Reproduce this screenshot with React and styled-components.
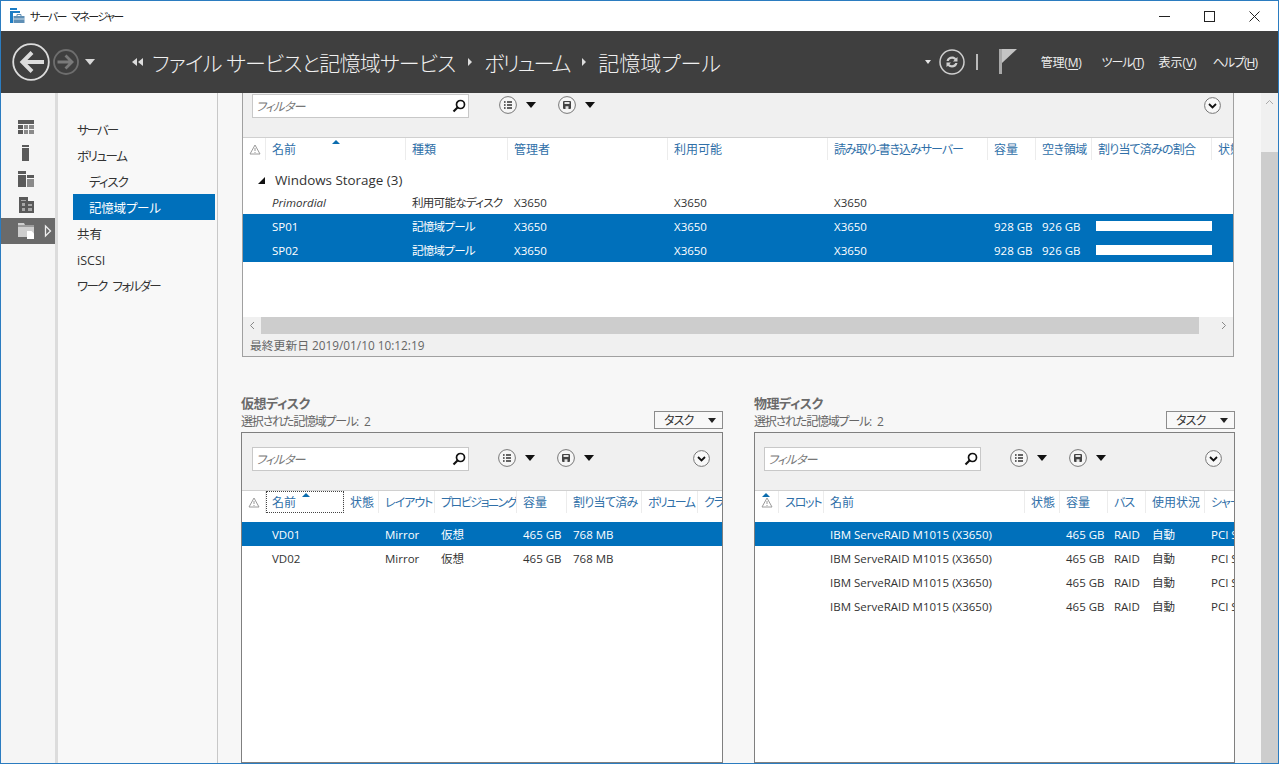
import React from 'react';
import styled, { createGlobalStyle } from 'styled-components';

const selectedBlue = '#0070bb';
const headerDark = '#3f3f3f';
const toolbarGray = '#f0f0f0';
const headerBlue = '#2f6fa8';

const GlobalStyle = createGlobalStyle`
    html, body {
        margin: 0;
        padding: 0;
        height: 100%;
        overflow: hidden;
    }
    body {
        font-family: "Open Sans", "Noto Sans CJK JP", sans-serif;
        font-size: 12px;
        color: #333;
        font-feature-settings: "palt";
    }
`;

const Window = styled.div`
    width: 1279px;
    height: 764px;
    box-sizing: border-box;
    border: 1px solid #2b7cc0;
    display: flex;
    flex-direction: column;
    overflow: hidden;
    background: #f7f7f7;
`;

const TitleBar = styled.div`
    height: 30px;
    flex: none;
    background: #fff;
    display: flex;
    align-items: center;
    padding-left: 8px;
    gap: 5px;
    font-size: 11px;
    color: #222;
`;

const TitleText = styled.span`
    letter-spacing: -1.6px;
    word-spacing: 4px;
`;

const WindowButtons = styled.div`
    margin-left: auto;
    display: flex;
    height: 100%;
    margin-right: 1px;
`;

const WindowButton = styled.div`
    width: 45px;
    display: flex;
    align-items: center;
    justify-content: center;
`;

const Header = styled.div`
    height: 62px;
    flex: none;
    background: ${headerDark};
    display: flex;
    align-items: center;
    padding-left: 11px;
    color: #eee;
`;

const NavArrows = styled.div`
    display: flex;
    align-items: center;
    gap: 3px;
    width: 120px;
`;

const Crumbs = styled.div`
    display: flex;
    align-items: center;
    font-size: 21px;
    font-weight: 300;
    color: #f0f0f0;
    white-space: nowrap;
`;

const Crumb = styled.span`
    letter-spacing: ${(p) => p.$tight || 0}px;
`;

const CrumbArrow = styled.span`
    width: 0;
    height: 0;
    border-left: 4px solid #ddd;
    border-top: 4px solid transparent;
    border-bottom: 4px solid transparent;
    margin: 0 12px 0 13px;
`;

const BackArrows = styled.span`
    display: flex;
    gap: 1px;
    margin-right: 9px;
`;

const SmallLeft = styled.span`
    width: 0;
    height: 0;
    border-right: 5px solid #ddd;
    border-top: 4px solid transparent;
    border-bottom: 4px solid transparent;
`;

const HeaderRight = styled.div`
    margin-left: auto;
    display: flex;
    align-items: center;
    height: 100%;
    padding-right: 21px;
`;

const HistoryCaret = styled.span`
    width: 0;
    height: 0;
    border-top: 6px solid #d8d8d8;
    border-left: 5px solid transparent;
    border-right: 5px solid transparent;
    margin-left: 3px;
`;

const NotifyCaret = styled.span`
    width: 0;
    height: 0;
    border-top: 4px solid #e6e6e6;
    border-left: 3.5px solid transparent;
    border-right: 3.5px solid transparent;
    margin-right: 8px;
`;

const HeaderDivider = styled.span`
    width: 2px;
    height: 16px;
    background: #bbb;
    margin: 0 21px 0 11px;
`;

const MenuList = styled.div`
    display: flex;
    margin-left: 24px;
    font-size: 12px;
    color: #eee;
`;

const MenuItem = styled.span`
    white-space: nowrap;
    margin-left: ${(p) => p.$gap || 0}px;
    letter-spacing: ${(p) => p.$tight || 0}px;
    u { text-underline-offset: 2px; }
`;

const Body = styled.div`
    flex: 1;
    display: flex;
    min-height: 0;
`;

const Rail = styled.div`
    width: 54px;
    flex: none;
    background: #f5f5f5;
    padding-top: 21px;
    box-sizing: border-box;
`;

const RailItem = styled.div`
    height: 26px;
    display: flex;
    align-items: center;
    padding-left: 16px;
    gap: 9px;
    background: ${(p) => (p.$active ? '#6a6a6a' : 'transparent')};
`;

const Nav = styled.div`
    width: 163px;
    flex: none;
    box-sizing: border-box;
    border-left: 3px solid #dcdcdc;
    border-right: 1px solid #c8c8c8;
    background: #f8f8f8;
    padding: 23px 2px 0 15px;
    font-size: 12.5px;
`;

const NavItem = styled.div`
    height: 26px;
    line-height: 29px;
    padding-left: ${(p) => (p.$sub ? '16px' : '4px')};
    letter-spacing: ${(p) => p.$tight || 0}px;
    word-spacing: 4px;
    color: ${(p) => (p.$selected ? '#fff' : '#333')};
    background: ${(p) => (p.$selected ? selectedBlue : 'transparent')};
    white-space: nowrap;
`;

const Main = styled.div`
    flex: 1;
    min-width: 0;
    padding: 0 27px 0 24px;
    display: flex;
    flex-direction: column;
    overflow: hidden;
`;

const PageScroll = styled.div`
    width: 17px;
    flex: none;
    background: ${toolbarGray};
    display: flex;
    flex-direction: column;
`;

const ScrollUp = styled.div`
    height: 59px;
    display: flex;
    justify-content: center;
    padding-top: 6px;
    box-sizing: border-box;
`;

const ScrollThumb = styled.div`
    flex: 1;
    background: #cdcdcd;
`;

const Panel = styled.div`
    border: 1px solid ${(p) => (p.$dark ? '#7f7f7f' : '#a0a0a0')};
    border-top: ${(p) => (p.$open ? 'none' : '')};
    background: #fff;
    display: flex;
    flex-direction: column;
    overflow: hidden;
    box-sizing: border-box;
    height: ${(p) => p.$height}px;
    flex: ${(p) => (p.$grow ? 1 : 'none')};
`;

const Toolbar = styled.div`
    height: ${(p) => p.$height}px;
    flex: none;
    box-sizing: border-box;
    background: ${toolbarGray};
    border-bottom: 1px solid #d0d0d0;
    display: flex;
    align-items: flex-start;
    padding: ${(p) => p.$top}px 12px 0 ${(p) => p.$left}px;
`;

const Filter = styled.div`
    width: 217px;
    height: 24px;
    flex: none;
    box-sizing: border-box;
    background: #fff;
    border: 1px solid #c8c8c8;
    display: flex;
    align-items: center;
    justify-content: space-between;
    padding: 0 1px 0 3px;
    font-style: italic;
    font-size: 12px;
    letter-spacing: -0.8px;
    color: #777;
`;

const ToolButton = styled.div`
    display: flex;
    align-items: center;
    gap: 9px;
    margin-left: ${(p) => p.$gap}px;
    height: 22px;
`;

const Caret = styled.span`
    width: 0;
    height: 0;
    border-top: 6px solid #111;
    border-left: 5.5px solid transparent;
    border-right: 5.5px solid transparent;
`;

const ExpandButton = styled.div`
    margin-left: auto;
    height: 22px;
    display: flex;
    align-items: center;
`;

const GridRow = styled.div`
    display: grid;
    grid-template-columns: ${(p) => p.$cols};
    flex: none;
    white-space: nowrap;
`;

const HeadRow = styled(GridRow)`
    height: ${(p) => p.$height}px;
    background: #fff;
    color: ${headerBlue};
    font-size: 12px;
`;

const HeadCell = styled.div`
    position: relative;
    height: 22px;
    line-height: 24px;
    padding-left: 6px;
    box-sizing: border-box;
    overflow: hidden;
    letter-spacing: ${(p) => p.$tight || 0}px;
    border-right: 1px solid #ececec;
    outline: ${(p) => (p.$focus ? '1px dotted #444' : 'none')};
    outline-offset: -1px;
`;

const SortMark = styled.span`
    position: absolute;
    top: 2px;
    left: ${(p) => p.$left}px;
    width: 0;
    height: 0;
    border-bottom: 4px solid #0a6cae;
    border-left: 4px solid transparent;
    border-right: 4px solid transparent;
`;

const WarnCell = styled(HeadCell)`
    padding: 6px 0 0 6px;
    line-height: 0;
`;

const GroupRow = styled.div`
    height: 22px;
    flex: none;
    box-sizing: border-box;
    padding: 2px 0 0 15px;
    display: flex;
    align-items: center;
    gap: 10px;
    font-size: 13.4px;
    color: #333;
`;

const GroupMark = styled.span`
    width: 0;
    height: 0;
    border-bottom: 7px solid #111;
    border-left: 7px solid transparent;
`;

const TableRow = styled(GridRow)`
    height: 24px;
    line-height: 25px;
    font-size: 11.5px;
    background: ${(p) => (p.$selected ? selectedBlue : '#fff')};
    color: ${(p) => (p.$selected ? '#fff' : '#333')};
`;

const Cell = styled.div`
    padding-left: 6px;
    overflow: hidden;
    font-style: ${(p) => (p.$italic ? 'italic' : 'normal')};
`;

const Tight = styled.span`
    letter-spacing: -0.7px;
`;

const BarCell = styled.div`
    display: flex;
    align-items: center;
    padding-left: 4px;
`;

const Bar = styled.div`
    width: 100%;
    height: 10px;
    background: #fff;
`;

const RowsArea = styled.div`
    flex: 1;
    min-height: 0;
    display: flex;
    flex-direction: column;
    background: #fff;
`;

const HScroll = styled.div`
    height: 17px;
    flex: none;
    background: ${toolbarGray};
    display: flex;
    align-items: center;
    justify-content: space-between;
`;

const HScrollArrow = styled.div`
    width: 18px;
    flex: none;
    display: flex;
    justify-content: center;
`;

const HScrollTrack = styled.div`
    flex: 1;
    height: 100%;
`;

const HScrollThumb = styled.div`
    width: ${(p) => p.$width}px;
    height: 100%;
    background: #cdcdcd;
`;

const Footer = styled.div`
    height: 22px;
    flex: none;
    background: ${toolbarGray};
    padding-left: 7px;
    line-height: 23px;
    font-size: 11.8px;
    color: #666;
`;

const LowerGrid = styled.div`
    display: grid;
    grid-template-columns: 482px 481px;
    column-gap: 31px;
    margin: 37px -2px 0 -1px;
    flex: 1;
    min-height: 0;
`;

const Section = styled.div`
    display: flex;
    flex-direction: column;
    min-width: 0;
    min-height: 0;
`;

const SectionHead = styled.div`
    height: 38px;
    flex: none;
    display: flex;
    align-items: flex-end;
    justify-content: space-between;
    padding-bottom: 2px;
    box-sizing: border-box;
`;

const SectionTitle = styled.div`
    font-size: 13px;
    font-weight: 700;
    letter-spacing: -0.5px;
    color: #6a6a6a;
    line-height: 20px;
`;

const SectionSub = styled.div`
    font-size: 12px;
    letter-spacing: -1.2px;
    word-spacing: 4px;
    color: #666;
    line-height: 17px;
`;

const TaskButton = styled.div`
    width: 69px;
    height: 18px;
    margin-bottom: 1px;
    box-sizing: border-box;
    border: 1px solid #8c8c8c;
    background: #f8f8f8;
    display: flex;
    align-items: center;
    justify-content: space-between;
    padding: 0 6px 0 9px;
    font-size: 12px;
    letter-spacing: -0.8px;
    color: #333;
`;

const TaskCaret = styled.span`
    width: 0;
    height: 0;
    border-top: 5px solid #222;
    border-left: 4.5px solid transparent;
    border-right: 4.5px solid transparent;
`;

const AppIcon = () => (
    <svg width="16" height="16" viewBox="0 0 16 16">
        <rect x="1" y="0" width="7" height="2" fill="#1c7cc4" />
        <rect x="1" y="3" width="10" height="2" fill="#1c7cc4" />
        <rect x="1" y="5" width="3" height="10" fill="#1c7cc4" />
        <path d="M8 8V6.500h4V8" fill="none" stroke="#5f8fb5" />
        <rect x="4.500" y="8" width="11" height="7" fill="#5f8fb5" />
        <path d="M4.500 11h11" stroke="#fff" strokeWidth=".7" />
    </svg>
);

const SearchIcon = () => (
    <svg width="16" height="16" viewBox="0 0 16 16">
        <circle cx="9.5" cy="6.5" r="4" fill="none" stroke="#111" strokeWidth="1.7" />
        <path d="M6.5 9.5 2.5 13.5" stroke="#111" strokeWidth="2.2" />
    </svg>
);

const ListIcon = () => (
    <svg width="18" height="18" viewBox="0 0 18 18">
        <circle cx="9" cy="9" r="8.4" fill="#f6f6f6" stroke="#777" />
        <path d="M5 6h1.600M8 6h5M5 9h1.600M8 9h5M5 12h1.600M8 12h5" stroke="#333" strokeWidth="1.7" />
    </svg>
);

const SaveIcon = () => (
    <svg width="18" height="18" viewBox="0 0 18 18">
        <circle cx="9" cy="9" r="8.4" fill="#f6f6f6" stroke="#777" />
        <rect x="5" y="5" width="8" height="8" rx="1" fill="#444" />
        <path d="M6.500 6h5v2h-5zM7.500 10.200h3V13h-3z" fill="#e4e4e4" />
    </svg>
);

const ExpandIcon = () => (
    <svg width="17" height="17" viewBox="0 0 17 17">
        <circle cx="8.5" cy="8.5" r="7.9" fill="#f8f8f8" stroke="#777" />
        <path d="M5 7l3.5 3.5L12 7" fill="none" stroke="#111" strokeWidth="1.8" />
    </svg>
);

const WarnIcon = () => (
    <svg width="12" height="11" viewBox="0 0 12 11">
        <path d="M6 1 11 10H1z" fill="none" stroke="#9a9a9a" />
        <path d="M6 4v3M6 8v1" stroke="#9a9a9a" />
    </svg>
);

const BackIcon = () => (
    <svg width="38" height="38" viewBox="0 0 38 38">
        <circle cx="19" cy="19" r="17.8" fill="none" stroke="#dcdcdc" strokeWidth="1.800" />
        <path d="M32 19H10M20 9.500 10.500 19l9.500 9.500" fill="none" stroke="#dcdcdc" strokeWidth="4" />
    </svg>
);

const ForwardIcon = () => (
    <svg width="26" height="26" viewBox="0 0 26 26">
        <circle cx="13" cy="13" r="12" fill="none" stroke="#6e6e6e" strokeWidth="1.800" />
        <path d="M4.500 13H19M12.500 6.500 19 13l-6.500 6.500" fill="none" stroke="#7a7a7a" strokeWidth="2.800" />
    </svg>
);

const RefreshIcon = () => (
    <svg width="26" height="26" viewBox="0 0 26 26">
        <circle cx="13" cy="13" r="12" fill="none" stroke="#cfcfcf" strokeWidth="1.5" />
        <path d="M7.500 12c.5-3 3-4.500 5.500-4.500 1.800 0 3 .7 4 1.700L18.500 8v4.500H14l1.600-1.700c-.7-.7-1.600-1-2.600-1-1.500 0-2.700.8-3.200 2.200zM18.500 14c-.5 3-3 4.500-5.500 4.500-1.800 0-3-.7-4-1.700L7.500 18v-4.500H12l-1.600 1.700c.7.700 1.600 1 2.600 1 1.500 0 2.700-.8 3.200-2.200z" fill="#cfcfcf" />
    </svg>
);

const FlagIcon = () => (
    <svg width="18" height="26" viewBox="0 0 18 26">
        <rect x="0" y="0" width="3" height="25" fill="#a8a8a8" />
        <path d="M3 0h15L3 14z" fill="#c4c4c4" />
    </svg>
);

const railDark = '#5a5a5a';
const railMid = '#8a8a8a';

const DashboardIcon = () => (
    <svg width="18" height="16" viewBox="0 0 18 16">
        <rect x="1" y="1" width="16" height="4" fill={railDark} />
        <path d="M1 6h5v4H1zM1 11h5v4H1z" fill={railDark} />
        <path d="M7 6h4v4H7zM12 6h5v4h-5zM7 11h4v4H7zM12 11h5v4h-5z" fill={railMid} />
    </svg>
);

const LocalIcon = () => (
    <svg width="18" height="18" viewBox="0 0 18 18">
        <rect x="5" y="1" width="7" height="2" fill={railDark} />
        <rect x="5" y="4" width="7" height="13" fill={railDark} />
    </svg>
);

const AllServersIcon = () => (
    <svg width="18" height="18" viewBox="0 0 18 18">
        <rect x="1" y="1" width="8" height="3" fill={railDark} />
        <rect x="1" y="5" width="8" height="12" fill={railDark} />
        <rect x="10" y="5" width="7" height="3" fill={railDark} />
        <rect x="10" y="9" width="7" height="8" fill={railMid} />
    </svg>
);

const RolesIcon = () => (
    <svg width="18" height="16" viewBox="0 0 18 16">
        <path d="M2 0h9v4h6v12H2z" fill={railDark} />
        <path d="M4 3h5v1H4zM5 6h3v3H5zM5 11h3v3H5zM11 7h4v2h-4zM11 11h4v3h-4z" fill="#a8a8a8" />
    </svg>
);

const FilesIcon = () => (
    <svg width="18" height="18" viewBox="0 0 18 18">
        <path d="M1 1h6l1 2h9v12H1z" fill="#cfcfcf" />
        <path d="M1 4h16" stroke="#6a6a6a" />
        <path d="M10 9h4.500l2.500 2.500V17h-7z" fill="#fff" />
    </svg>
);

const RailExpand = () => (
    <svg width="8" height="14" viewBox="0 0 8 14">
        <path d="M1.500 2l5 5-5 5z" fill="none" stroke="#eee" strokeWidth="1.300" />
    </svg>
);

const TableToolbar = ({ height, top, left, listGap }) => (
    <Toolbar $height={height} $top={top} $left={left}>
        <Filter>
            フィルター
            <SearchIcon />
        </Filter>
        <ToolButton $gap={listGap}>
            <ListIcon />
            <Caret />
        </ToolButton>
        <ToolButton $gap={22}>
            <SaveIcon />
            <Caret />
        </ToolButton>
        <ExpandButton>
            <ExpandIcon />
        </ExpandButton>
    </Toolbar>
);

const poolCols = '23px 140px 102px 160px 160px 160px 48px 56px 120px 40px';
const virtualCols = '24px 78px 35px 56px 82px 50px 75px 56px 40px';
const physicalCols = '24px 45px 201px 35px 48px 38px 59px 60px';

const poolHeaders = [
    { text: '名前' },
    { text: '種類' },
    { text: '管理者' },
    { text: '利用可能' },
    { text: '読み取り-書き込みサーバー', tight: -1 },
    { text: '容量' },
    { text: '空き領域', tight: -0.4 },
    { text: '割り当て済みの割合', tight: -0.8 },
    { text: '状態' },
];
const virtualHeaders = [
    { text: '名前' },
    { text: '状態' },
    { text: 'レイアウト', tight: -1 },
    { text: 'プロビジョニング', tight: -1.5 },
    { text: '容量' },
    { text: '割り当て済み', tight: -0.7 },
    { text: 'ボリューム', tight: -1.6 },
    { text: 'クラスター', tight: -1 },
];
const physicalHeaders = [
    { text: 'スロット', tight: -1.2 },
    { text: '名前' },
    { text: '状態' },
    { text: '容量' },
    { text: 'バス', tight: -1 },
    { text: '使用状況' },
    { text: 'シャーシ', tight: -1 },
];

const TableHead = ({ cols, labels, height, focusName, sortLeft, warnSort }) => (
    <HeadRow $cols={cols} $height={height}>
        <WarnCell>
            {warnSort && <SortMark $left={7} />}
            <WarnIcon />
        </WarnCell>
        {labels.map((label, i) => (
            <HeadCell key={label.text} $tight={label.tight} $focus={focusName && i === 0}>
                {i === 0 && sortLeft && <SortMark $left={sortLeft} />}
                {label.text}
            </HeadCell>
        ))}
    </HeadRow>
);

const DataRow = ({ cols, cells, selected, italic, bar }) => (
    <TableRow $cols={cols} $selected={selected}>
        <Cell />
        {cells.map((text, i) => (
            <Cell key={i} $italic={italic && i === 0}>{text}</Cell>
        ))}
        {bar && (
            <BarCell>
                <Bar />
            </BarCell>
        )}
    </TableRow>
);

const App = () => (
    <>
        <GlobalStyle />
        <Window>
            <TitleBar>
                <AppIcon />
                <TitleText>サーバー マネージャー</TitleText>
                <WindowButtons>
                    <WindowButton>
                        <svg width="11" height="11" viewBox="0 0 11 11"><path d="M0 5.500h11" stroke="#222" /></svg>
                    </WindowButton>
                    <WindowButton>
                        <svg width="11" height="11" viewBox="0 0 11 11"><rect x=".5" y=".5" width="10" height="10" fill="none" stroke="#222" /></svg>
                    </WindowButton>
                    <WindowButton>
                        <svg width="11" height="11" viewBox="0 0 11 11"><path d="M.5.5l10 10M10.500.5l-10 10" stroke="#222" /></svg>
                    </WindowButton>
                </WindowButtons>
            </TitleBar>
            <Header>
                <NavArrows>
                    <BackIcon />
                    <ForwardIcon />
                    <HistoryCaret />
                </NavArrows>
                <Crumbs>
                    <BackArrows>
                        <SmallLeft />
                        <SmallLeft />
                    </BackArrows>
                    <Crumb $tight={-0.8}>ファイル サービスと記憶域サービス</Crumb>
                    <CrumbArrow />
                    <Crumb $tight={-2}>ボリューム</Crumb>
                    <CrumbArrow />
                    <Crumb>記憶域プール</Crumb>
                </Crumbs>
                <HeaderRight>
                    <NotifyCaret />
                    <RefreshIcon />
                    <HeaderDivider />
                    <FlagIcon />
                    <MenuList>
                        <MenuItem $tight={-0.2}>管理(<u>M</u>)</MenuItem>
                        <MenuItem $gap={20} $tight={-1}>ツール(<u>T</u>)</MenuItem>
                        <MenuItem $gap={15}>表示(<u>V</u>)</MenuItem>
                        <MenuItem $gap={16} $tight={-1}>ヘルプ(<u>H</u>)</MenuItem>
                    </MenuList>
                </HeaderRight>
            </Header>
            <Body>
                <Rail>
                    <RailItem><DashboardIcon /></RailItem>
                    <RailItem><LocalIcon /></RailItem>
                    <RailItem><AllServersIcon /></RailItem>
                    <RailItem><RolesIcon /></RailItem>
                    <RailItem $active><FilesIcon /><RailExpand /></RailItem>
                </Rail>
                <Nav>
                    <NavItem $tight={-2}>サーバー</NavItem>
                    <NavItem $tight={-1.4}>ボリューム</NavItem>
                    <NavItem $sub $tight={-1}>ディスク</NavItem>
                    <NavItem $sub $selected $tight={-0.2}>記憶域プール</NavItem>
                    <NavItem>共有</NavItem>
                    <NavItem>iSCSI</NavItem>
                    <NavItem $tight={-1.6}>ワーク フォルダー</NavItem>
                </Nav>
                <Main>
                    <Panel $open $height={264}>
                        <TableToolbar height={45} top={1} left={9} listGap={30} />
                        <TableHead cols={poolCols} labels={poolHeaders} height={30} sortLeft={66} />
                        <RowsArea>
                            <GroupRow>
                                <GroupMark />
                                Windows Storage (3)
                            </GroupRow>
                            <DataRow cols={poolCols} italic cells={['Primordial', <Tight>利用可能なディスク</Tight>, 'X3650', 'X3650', 'X3650']} />
                            <DataRow cols={poolCols} selected bar cells={['SP01', <Tight>記憶域プール</Tight>, 'X3650', 'X3650', 'X3650', '928 GB', '926 GB']} />
                            <DataRow cols={poolCols} selected bar cells={['SP02', <Tight>記憶域プール</Tight>, 'X3650', 'X3650', 'X3650', '928 GB', '926 GB']} />
                        </RowsArea>
                        <HScroll>
                            <HScrollArrow>
                                <svg width="6" height="9" viewBox="0 0 6 9"><path d="M5 1 1.500 4.500 5 8" fill="none" stroke="#888" /></svg>
                            </HScrollArrow>
                            <HScrollThumb $width={938} />
                            <HScrollTrack />
                            <HScrollArrow>
                                <svg width="6" height="9" viewBox="0 0 6 9"><path d="M1 1l3.500 3.500L1 8" fill="none" stroke="#888" /></svg>
                            </HScrollArrow>
                        </HScroll>
                        <Footer>最終更新日 2019/01/10 10:12:19</Footer>
                    </Panel>
                    <LowerGrid>
                        <Section>
                            <SectionHead>
                                <div>
                                    <SectionTitle>仮想ディスク</SectionTitle>
                                    <SectionSub>選択された記憶域プール: 2</SectionSub>
                                </div>
                                <TaskButton>タスク<TaskCaret /></TaskButton>
                            </SectionHead>
                            <Panel $dark $grow>
                                <TableToolbar height={58} top={14} left={10} listGap={29} />
                                <TableHead cols={virtualCols} labels={virtualHeaders} height={31} focusName sortLeft={36} />
                                <RowsArea>
                                    <DataRow cols={virtualCols} selected cells={['VD01', '', 'Mirror', '仮想', '465 GB', '768 MB']} />
                                    <DataRow cols={virtualCols} cells={['VD02', '', 'Mirror', '仮想', '465 GB', '768 MB']} />
                                </RowsArea>
                            </Panel>
                        </Section>
                        <Section>
                            <SectionHead>
                                <div>
                                    <SectionTitle>物理ディスク</SectionTitle>
                                    <SectionSub>選択された記憶域プール: 2</SectionSub>
                                </div>
                                <TaskButton>タスク<TaskCaret /></TaskButton>
                            </SectionHead>
                            <Panel $dark $grow>
                                <TableToolbar height={58} top={14} left={9} listGap={29} />
                                <TableHead cols={physicalCols} labels={physicalHeaders} height={31} warnSort />
                                <RowsArea>
                                    {[true, false, false, false].map((selected, i) => (
                                        <DataRow
                                            key={i}
                                            cols={physicalCols}
                                            selected={selected}
                                            cells={['', 'IBM ServeRAID M1015 (X3650)', '', '465 GB', 'RAID', '自動', 'PCI Slot']}
                                        />
                                    ))}
                                </RowsArea>
                            </Panel>
                        </Section>
                    </LowerGrid>
                </Main>
                <PageScroll>
                    <ScrollUp>
                        <svg width="9" height="6" viewBox="0 0 9 6"><path d="M1 5l3.500-3.500L8 5" fill="none" stroke="#aaa" /></svg>
                    </ScrollUp>
                    <ScrollThumb />
                </PageScroll>
            </Body>
        </Window>
    </>
);

export default App;
